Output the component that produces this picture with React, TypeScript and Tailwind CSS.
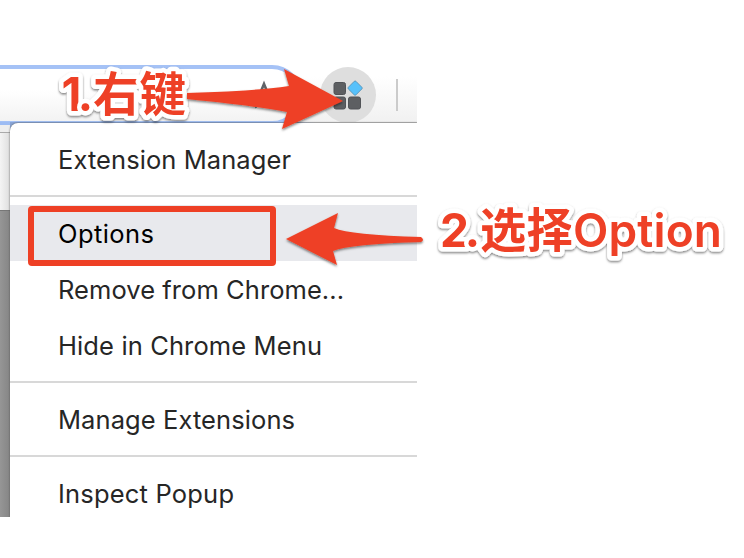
type ItemProps = { label: string; width: number; active?: boolean };

function MenuItem({ label, width, active }: ItemProps) {
  return (
    <div className={`flex h-14 shrink-0 items-center pl-12 ${active ? "bg-[#e8e9ed] text-black" : "text-[#262626]"}`}>
      <svg className="h-14 w-[330px] overflow-visible" aria-label={label}>
        <text x="0" y="37.5" fontSize="25.5" textLength={width} fill="currentColor">
          {label}
        </text>
      </svg>
    </div>
  );
}

function Separator() {
  return (
    <div className="flex h-[18px] shrink-0 items-center">
      <div className="h-0.5 w-full bg-[#d8d8d8]" />
    </div>
  );
}

function Toolbar() {
  return (
    <div className="flex h-[57px] shrink-0 overflow-hidden bg-gradient-to-b from-white from-20% to-[#f1f1f1]">
      <div className="-ml-8 flex h-[60px] w-[334px] shrink-0 justify-end rounded-full border-4 border-[#a5c2f6] bg-gradient-to-b from-white from-40% to-[#f3f3f3] pt-[11px] pr-[19px]">
        <svg width="30" height="30" viewBox="0 0 30 30" fill="none" stroke="#5f6368" strokeWidth="2.6">
          <path d="M15 4l3.1 7.6 8.2.7-6.2 5.4 1.9 8-7-4.3-7 4.3 1.9-8-6.2-5.4 8.2-.7z" />
        </svg>
      </div>
      <div className="mt-0.5 ml-[18px] flex size-[56px] shrink-0 items-center justify-center rounded-full bg-[#dedede]">
        <svg width="30" height="30" viewBox="0 0 30 30">
          <g fill="#5d5f62" stroke="#515357">
            <rect x="1" y="2.5" width="11.5" height="12" rx="2" />
            <rect x="1" y="17" width="11.5" height="12" rx="2" />
            <rect x="15.5" y="17" width="12" height="12" rx="2" />
          </g>
          <rect x="16.7" y="2.7" width="10.8" height="10.8" rx="1.2" transform="rotate(45 22.1 8.1)" fill="#57c1fb" stroke="#5488a8" strokeWidth=".7" />
        </svg>
      </div>
      <div className="mt-[14px] ml-5 h-8 w-0.5 bg-[#cbcbcb]" />
    </div>
  );
}

export default function App() {
  return (
    <div className="relative h-[558px] w-[744px] overflow-hidden bg-white font-['Inter','Noto_Sans_CJK_SC',sans-serif]">
      <div className="flex h-[517px] w-[417px] flex-col overflow-hidden pt-[65px]">
        <Toolbar />
        <div className="flex min-h-0 flex-1 bg-[#9bb5e6]">
          <div className="flex w-2.5 shrink-0 flex-col">
            <div className="h-[3px] bg-[#9dbcf3]" />
            <div className="h-[7px] bg-[#eeeeee]" />
            <div className="h-px bg-[#aaaaaa]" />
            <div className="h-[77px] bg-gradient-to-r from-[#f4f4f4] to-[#dedede]" />
            <div className="h-px bg-[#777777]" />
            <div className="flex-1 bg-gradient-to-r from-[#969696] to-[#858585]" />
          </div>
          <div className="flex min-w-0 flex-1 flex-col bg-gradient-to-r from-[#88a4d6] from-65% to-[#bdbdbd] to-75%">
            <div className="mt-px flex flex-1 flex-col overflow-hidden rounded-tl-lg bg-white pt-2 shadow-[0_0_2px_#555]">
              <MenuItem label="Extension Manager" width={233} />
              <Separator />
              <MenuItem label="Options" width={96} active />
              <MenuItem label="Remove from Chrome..." width={286} />
              <MenuItem label="Hide in Chrome Menu" width={264} />
              <Separator />
              <MenuItem label="Manage Extensions" width={237} />
              <Separator />
              <MenuItem label="Inspect Popup" width={176} />
            </div>
          </div>
        </div>
      </div>

      <svg className="absolute inset-0 h-full w-full" viewBox="0 0 744 558">
        <defs>
          <filter id="soft" x="-10%" y="-30%" width="120%" height="170%">
            <feDropShadow dx="0" dy="1.5" stdDeviation="1.3" floodColor="#000" floodOpacity="0.5" />
          </filter>
        </defs>
        <g fill="#ee4025">
          <g filter="url(#soft)" stroke="#fff" strokeWidth="9" strokeLinejoin="round" paintOrder="stroke" fontWeight="700">
            <text x="61.5" y="111" fontSize="46" textLength="31.5">1.</text>
            <text x="93" y="111" fontSize="46.5" textLength="93" fontFamily="Noto Sans CJK SC">右键</text>
          </g>
          <path filter="url(#soft)" d="M187 93Q256 91 289 86L284 69L343 101L282 129L287 112Q256 106 187 99Z" />
          <rect x="31" y="209" width="242" height="54" rx="1" fill="none" stroke="#ee4025" strokeWidth="6" />
          <path filter="url(#soft)" d="M286 239L338 213L334 228Q350 235 421 237Q425 240 421 242Q350 244 333 251L337 265Z" />
          <g filter="url(#soft)" stroke="#fff" strokeWidth="9" strokeLinejoin="round" paintOrder="stroke">
            <text x="440" y="247" fontSize="46" fontWeight="700" textLength="40">2.</text>
            <text x="480" y="247" fontSize="46.5" fontWeight="700" textLength="93" fontFamily="Noto Sans CJK SC">选择</text>
            <text x="573" y="247" fontSize="46" fontWeight="600" textLength="149">Option</text>
          </g>
        </g>
      </svg>
    </div>
  );
}
